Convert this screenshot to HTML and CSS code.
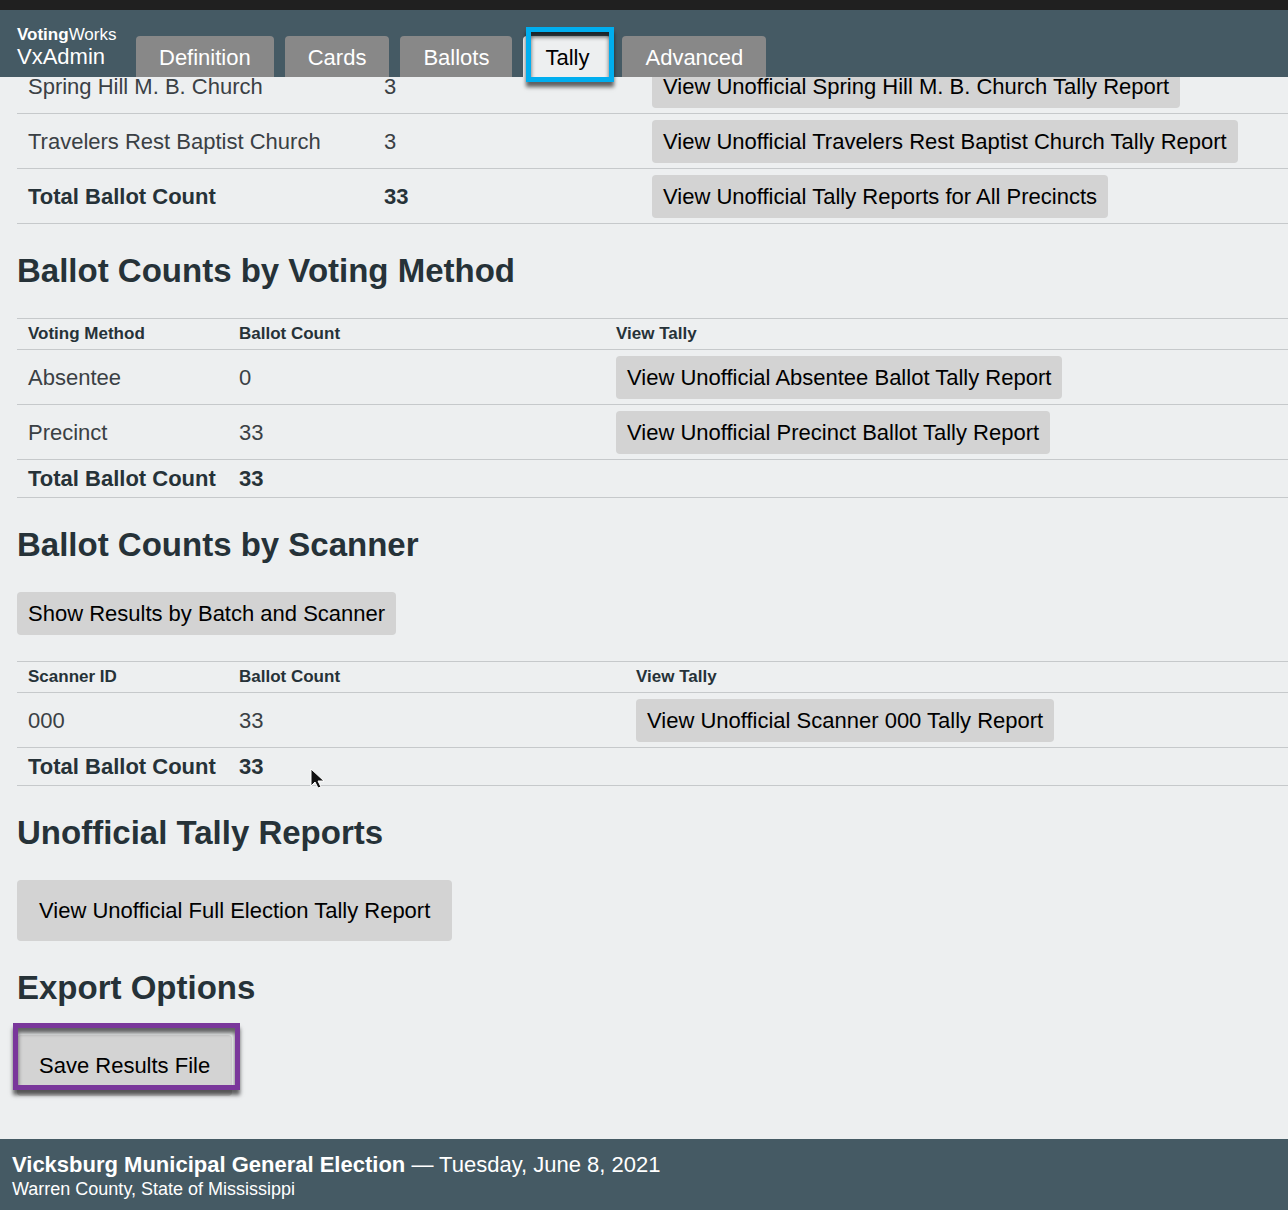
FILE: index.html
```html
<!DOCTYPE html>
<html lang="en">
<head>
<meta charset="utf-8">
<meta name="viewport" content="width=device-width, initial-scale=1">
<title>VxAdmin</title>
<link rel="stylesheet" href="styles.css">
</head>
<body>
<header class="header">
  <div class="brand">
    <span class="brand-company"><b>Voting</b>Works</span>
    <span class="brand-app">VxAdmin</span>
  </div>
  <nav class="tabs">
    <button class="tab" type="button">Definition</button>
    <button class="tab" type="button">Cards</button>
    <button class="tab" type="button">Ballots</button>
    <button class="tab tab-active" type="button" aria-current="page">Tally<span class="mark mark-tab"></span></button>
    <button class="tab" type="button">Advanced</button>
  </nav>
</header>

<main class="main">
  <table class="table table-precincts">
    <colgroup><col class="col-name"><col class="col-count"><col></colgroup>
    <tbody>
      <tr><td>Spring Hill M. B. Church</td><td>3</td><td><button class="button" type="button">View Unofficial Spring Hill M. B. Church Tally Report</button></td></tr>
      <tr><td>Travelers Rest Baptist Church</td><td>3</td><td><button class="button" type="button">View Unofficial Travelers Rest Baptist Church Tally Report</button></td></tr>
      <tr><th scope="row">Total Ballot Count</th><td><b>33</b></td><td><button class="button" type="button">View Unofficial Tally Reports for All Precincts</button></td></tr>
    </tbody>
  </table>

  <h2>Ballot Counts by Voting Method</h2>
  <table class="table table-methods">
    <colgroup><col class="col-name"><col class="col-count"><col></colgroup>
    <thead>
      <tr><th scope="col">Voting Method</th><th scope="col">Ballot Count</th><th scope="col">View Tally</th></tr>
    </thead>
    <tbody>
      <tr><td>Absentee</td><td>0</td><td><button class="button" type="button">View Unofficial Absentee Ballot Tally Report</button></td></tr>
      <tr><td>Precinct</td><td>33</td><td><button class="button" type="button">View Unofficial Precinct Ballot Tally Report</button></td></tr>
      <tr><th scope="row">Total Ballot Count</th><td><b>33</b></td><td></td></tr>
    </tbody>
  </table>

  <h2>Ballot Counts by Scanner</h2>
  <div class="toolbar"><button class="button" type="button">Show Results by Batch and Scanner</button></div>
  <table class="table table-scanners">
    <colgroup><col class="col-name"><col class="col-count"><col></colgroup>
    <thead>
      <tr><th scope="col">Scanner ID</th><th scope="col">Ballot Count</th><th scope="col">View Tally</th></tr>
    </thead>
    <tbody>
      <tr><td>000</td><td>33</td><td><button class="button" type="button">View Unofficial Scanner 000 Tally Report</button></td></tr>
      <tr><th scope="row">Total Ballot Count</th><td class="cursor-cell"><b>33</b>
        <svg class="cursor" width="16" height="24" viewBox="0 0 16 24" aria-hidden="true"><path d="M2 1v17l4-4 3 6 3-1-3-6h6z" fill="#111" stroke="#fff" stroke-width="1"/></svg></td><td></td></tr>
    </tbody>
  </table>

  <h2>Unofficial Tally Reports</h2>
  <div><button class="button button-large" type="button">View Unofficial Full Election Tally Report</button></div>

  <h2>Export Options</h2>
  <div><button class="button button-large" type="button">Save Results File<span class="mark mark-save"></span></button></div>
</main>

<footer class="footer">
  <div class="election"><b>Vicksburg Municipal General Election</b> — Tuesday, June 8, 2021</div>
  <div class="county">Warren County, State of Mississippi</div>
</footer>
</body>
</html>
```
FILE: styles.css
```css
* {
  box-sizing: border-box;
}

body {
  display: flex;
  flex-direction: column;
  height: 100vh;
  margin: 0;
  overflow: hidden;
  background: #edeff0;
  color: #263238;
  font-family: "Liberation Sans", Arial, sans-serif;
  font-size: 22px;
  line-height: 26px;
}

/* Header */
.header {
  position: relative;
  z-index: 1;
  display: flex;
  flex: none;
  align-items: flex-end;
  gap: 20px;
  padding: 16px 17px 0;
  border-top: 10px solid #202020;
  background: #455a64;
  color: #fff;
}

.brand {
  display: flex;
  flex-direction: column;
  width: 99px;
  padding-bottom: 7px;
}

.brand-company {
  font-size: 17px;
  line-height: 18px;
}

.tabs {
  display: flex;
  gap: 11px;
}

.tab {
  position: relative;
  height: 41px;
  padding: 2px 23px 0;
  border: 0;
  border-radius: 4px 4px 0 0;
  background: #888;
  color: #fff;
  font: inherit;
}

.tab-active {
  padding: 2px 22px 0;
  background: #edeff0;
  color: #000;
}

/* Content, scrolled to its end */
.main {
  display: flex;
  flex: 1;
  flex-direction: column;
  justify-content: flex-end;
  min-height: 0;
  padding: 0 0 43px 17px;
  overflow: hidden;
}

h2 {
  margin: 27px 0;
  font-size: 33px;
  line-height: 40px;
}

.toolbar {
  margin-bottom: 26px;
}

.table {
  width: 100%;
  border-collapse: collapse;
  table-layout: fixed;
}

.table th,
.table td {
  padding: 6px 11px 5px;
  border-bottom: 1px solid #c6c9cb;
  text-align: left;
}

.table td {
  color: #3a4044;
}

.table b {
  color: #263238;
}

.table thead th {
  padding: 5px 11px;
  border-top: 1px solid #c6c9cb;
  font-size: 17px;
  line-height: 20px;
}

.col-name {
  width: 211px;
}

.table-precincts .col-name {
  width: 356px;
}

.table-precincts .col-count {
  width: 268px;
}

.table-methods .col-count {
  width: 377px;
}

.table-scanners .col-count {
  width: 397px;
}

.button {
  position: relative;
  display: block;
  padding: 9px 11px 8px;
  border: 0;
  border-radius: 4px;
  background: #d3d3d3;
  color: #000;
  font: inherit;
  white-space: nowrap;
}

.button-large {
  padding: 18px 22px 17px;
}

/* Highlight frames laid over a control */
.mark {
  position: absolute;
  border: 5px solid;
  box-shadow: 0 5px 4px rgb(0 0 0 / 60%), inset 0 5px 4px rgb(0 0 0 / 60%);
  pointer-events: none;
}

.mark-tab {
  top: -9px;
  left: 3px;
  width: 88px;
  height: 55px;
  border-color: #00aeef;
}

.mark-save {
  top: -12px;
  left: -4px;
  width: 227px;
  height: 67px;
  border-color: #7a379b;
}

.cursor-cell {
  position: relative;
}

.cursor {
  position: absolute;
  top: 20px;
  left: 81px;
}

/* Footer */
.footer {
  flex: none;
  padding: 13px 12px 10px;
  background: #455a64;
  color: #fff;
}

.county {
  font-size: 18px;
  line-height: 22px;
}
```
